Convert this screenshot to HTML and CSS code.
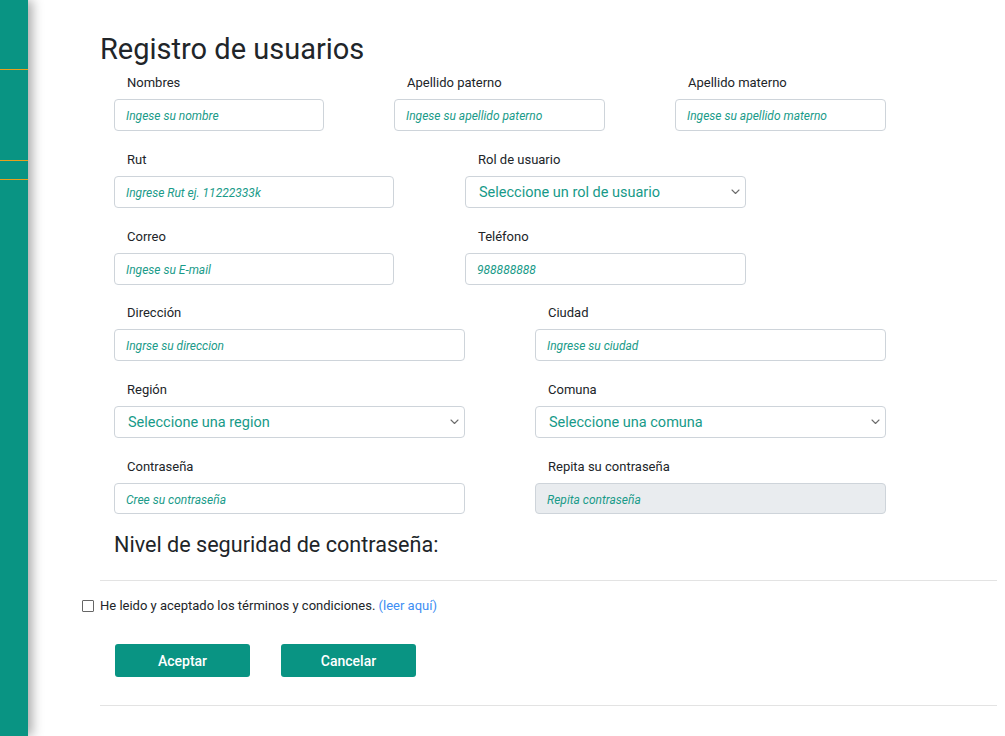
FILE: index.html
```html
<!DOCTYPE html>
<html lang="es">
<head>
<meta charset="utf-8">
<title>Registro de usuarios</title>
<link rel="stylesheet" href="styles.css">
</head>
<body>
<aside class="sidebar">
  <div class="nav-brand"></div>
  <div class="nav-item"></div>
  <div class="nav-item nav-item-small"></div>
</aside>
<main class="content">
  <h1 class="title">Registro de usuarios</h1>
  <form class="form">
    <div class="row row-3">
      <div class="field"><label>Nombres</label><input type="text" placeholder="Ingese su nombre"></div>
      <div class="field"><label>Apellido paterno</label><input type="text" placeholder="Ingese su apellido paterno"></div>
      <div class="field"><label>Apellido materno</label><input type="text" placeholder="Ingese su apellido materno"></div>
    </div>
    <div class="row row-2s">
      <div class="field"><label>Rut</label><input type="text" placeholder="Ingrese Rut ej. 11222333k"></div>
      <div class="field"><label>Rol de usuario</label>
        <div class="select-wrap">
          <select><option>Seleccione un rol de usuario</option></select>
          <svg class="chev" width="9" height="6" viewBox="0 0 9 6"><path d="M1 1l3.5 3.5L8 1" fill="none" stroke="#6c6c6c" stroke-width="1.1" stroke-linecap="round" stroke-linejoin="round"/></svg>
        </div>
      </div>
    </div>
    <div class="row row-2s row-tight">
      <div class="field"><label>Correo</label><input type="text" placeholder="Ingese su E-mail"></div>
      <div class="field"><label>Teléfono</label><input type="text" placeholder="988888888"></div>
    </div>
    <div class="row row-2">
      <div class="field"><label>Dirección</label><input type="text" placeholder="Ingrse su direccion"></div>
      <div class="field"><label>Ciudad</label><input type="text" placeholder="Ingrese su ciudad"></div>
    </div>
    <div class="row row-2">
      <div class="field"><label>Región</label>
        <div class="select-wrap">
          <select><option>Seleccione una region</option></select>
          <svg class="chev" width="9" height="6" viewBox="0 0 9 6"><path d="M1 1l3.5 3.5L8 1" fill="none" stroke="#6c6c6c" stroke-width="1.1" stroke-linecap="round" stroke-linejoin="round"/></svg>
        </div>
      </div>
      <div class="field"><label>Comuna</label>
        <div class="select-wrap">
          <select><option>Seleccione una comuna</option></select>
          <svg class="chev" width="9" height="6" viewBox="0 0 9 6"><path d="M1 1l3.5 3.5L8 1" fill="none" stroke="#6c6c6c" stroke-width="1.1" stroke-linecap="round" stroke-linejoin="round"/></svg>
        </div>
      </div>
    </div>
    <div class="row row-2 row-last">
      <div class="field"><label>Contraseña</label><input type="password" class="short" placeholder="Cree su contraseña"></div>
      <div class="field"><label>Repita su contraseña</label><input type="password" class="short" placeholder="Repita contraseña" disabled></div>
    </div>
    <h2 class="strength">Nivel de seguridad de contraseña:</h2>
  </form>
  <hr class="divider">
  <div class="check">
    <input type="checkbox" id="terms">
    <label for="terms">He leido y aceptado los términos y condiciones. <a href="#">(leer aquí)</a></label>
  </div>
  <div class="actions">
    <button type="button" class="btn">Aceptar</button>
    <button type="button" class="btn">Cancelar</button>
  </div>
  <hr class="divider divider-bottom">
</main>
</body>
</html>
```
FILE: styles.css
```css
html, body {
  margin: 0;
  padding: 0;
  height: 100%;
}
body {
  display: flex;
  font-family: Roboto, "Liberation Sans", Arial, sans-serif;
  color: #212529;
  background: #fff;
  overflow: hidden;
}
.sidebar {
  width: 28px;
  flex: 0 0 28px;
  height: 736px;
  background: #099483;
  box-shadow: 4px 0 12px rgba(0, 0, 0, 0.35);
  position: relative;
  z-index: 1;
  display: flex;
  flex-direction: column;
}
.nav-brand {
  height: 69px;
  border-bottom: 1px solid #e9a01c;
}
.nav-item {
  height: 90px;
  border-bottom: 1px solid #e9a01c;
}
.nav-item-small {
  height: 18px;
}
.content {
  flex: 1;
  padding: 0 8px 0 72px;
}
.title {
  margin: 32px 0 0;
  font-size: 29px;
  line-height: 34px;
  font-weight: 400;
  color: #212529;
}
.form {
  margin-left: 14px;
  width: 772px;
  margin-top: 6px;
}
.row {
  display: grid;
  margin-bottom: 18px;
}
.row-3 {
  grid-template-columns: 210px 211px 211px;
  column-gap: 70px;
}
.row-2s {
  grid-template-columns: 280px 281px;
  column-gap: 71px;
}
.row-2 {
  grid-template-columns: 351px 351px;
  column-gap: 70px;
}
.row-tight {
  margin-bottom: 17px;
}
.row-last {
  margin-bottom: 0;
}
.field {
  display: flex;
  flex-direction: column;
}
.field label {
  font-size: 13px;
  line-height: 20px;
  padding-left: 13px;
  padding-top: 1px;
  margin-bottom: 6px;
  color: #212529;
}
.field input,
.field select {
  box-sizing: border-box;
  width: 100%;
  height: 32px;
  border: 1px solid #ced4da;
  border-radius: 4px;
  background: #fff;
  font-family: Roboto, "Liberation Sans", Arial, sans-serif;
  margin: 0;
}
.field input.short {
  height: 31px;
}
.field input {
  padding: 2px 11px 0;
  font-size: 12px;
  font-style: italic;
  color: #179a88;
}
.field input::placeholder {
  color: #1a9b89;
  font-style: italic;
  opacity: 1;
}
.field input:disabled {
  background: #e9ecef;
}
.select-wrap {
  position: relative;
}
.field select {
  appearance: none;
  -webkit-appearance: none;
  padding: 0 30px 0 13px;
  font-size: 14.5px;
  color: #179a88;
}
.chev {
  position: absolute;
  right: 6px;
  top: 13px;
  pointer-events: none;
}
.strength {
  margin: 19px 0 0;
  font-size: 21.6px;
  line-height: 24px;
  font-weight: 400;
  color: #212529;
}
.divider {
  border: 0;
  border-top: 1px solid #e3e3e3;
  margin: 23px 0 0;
  height: 0;
}
.check {
  display: flex;
  align-items: center;
  margin-top: 15px;
  margin-left: -18px;
  font-size: 13px;
  line-height: 20px;
}
.check input {
  width: 12px;
  height: 12px;
  margin: 0 6px 0 0;
  appearance: none;
  -webkit-appearance: none;
  border: 1.5px solid #666;
  border-radius: 1px;
  box-sizing: border-box;
}
.check a {
  color: #3d8ef3;
  text-decoration: none;
}
.actions {
  display: flex;
  gap: 31px;
  margin-top: 28px;
  margin-left: 15px;
}
.btn {
  width: 135px;
  height: 33px;
  border: 0;
  border-radius: 3px;
  background: #099483;
  color: #fff;
  font-family: Roboto, "Liberation Sans", Arial, sans-serif;
  font-size: 14px;
  font-weight: 500;
  cursor: pointer;
}
.divider-bottom {
  margin-top: 28px;
}
```
